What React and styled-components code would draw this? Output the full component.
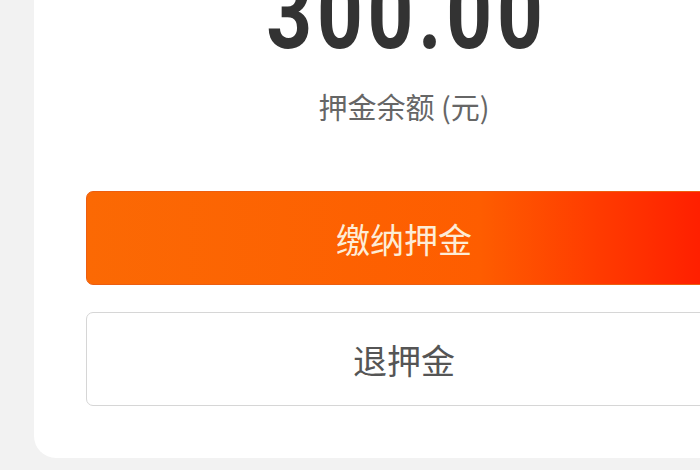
import React from "react";
import styled, { createGlobalStyle } from "styled-components";

const GlobalStyle = createGlobalStyle`
  body {
    margin: 0;
    background: #f2f2f2;
    font-family: "Noto Sans CJK SC", "Noto Sans", sans-serif;
  }
`;

// scrolled viewport: the card's top runs above the frame
const Page = styled.div`
  height: 470px;
  overflow: hidden;
  padding-left: 34px;
`;

const Card = styled.section`
  width: 740px;
  margin-top: -47px;
  background: #ffffff;
  border-radius: 0 0 22px 22px;
  padding: 0 52px 52px;
  box-sizing: border-box;
  display: flex;
  flex-direction: column;
`;

const Balance = styled.div`
  display: flex;
  flex-direction: column;
  align-items: center;
`;

const Amount = styled.div`
  font-family: "Roboto", "DejaVu Sans", sans-serif;
  font-weight: 700;
  font-size: 100px;
  line-height: 122px;
  color: #333333;
  letter-spacing: 6px;
  margin-right: -6px;
  transform: scaleX(0.8);
`;

const Caption = styled.div`
  margin-top: 11px;
  font-size: 29px;
  line-height: 40px;
  color: #666666;
`;

const Actions = styled.div`
  margin-top: 65px;
  display: flex;
  flex-direction: column;
  gap: 27px;
`;

const Button = styled.button`
  height: 94px;
  border-radius: 7px;
  font-family: "Noto Sans CJK SC", sans-serif;
  font-size: 34px;
  cursor: pointer;
  box-sizing: border-box;
  ${({ $primary }) =>
    $primary
      ? `
    border: 1px solid #ec5e10;
    color: #fdecd6;
    background: linear-gradient(90deg, #fb6904 0%, #fe5d00 62%, #ff3c00 80%, #ff1a00 100%);
  `
      : `
    border: 1px solid #d6d6d6;
    color: #555555;
    background: #ffffff;
  `}
`;

export default function App() {
  return (
    <Page>
      <GlobalStyle />
      <Card>
        <Balance>
          <Amount>300.00</Amount>
          <Caption>押金余额 (元)</Caption>
        </Balance>
        <Actions>
          <Button $primary>缴纳押金</Button>
          <Button>退押金</Button>
        </Actions>
      </Card>
    </Page>
  );
}
